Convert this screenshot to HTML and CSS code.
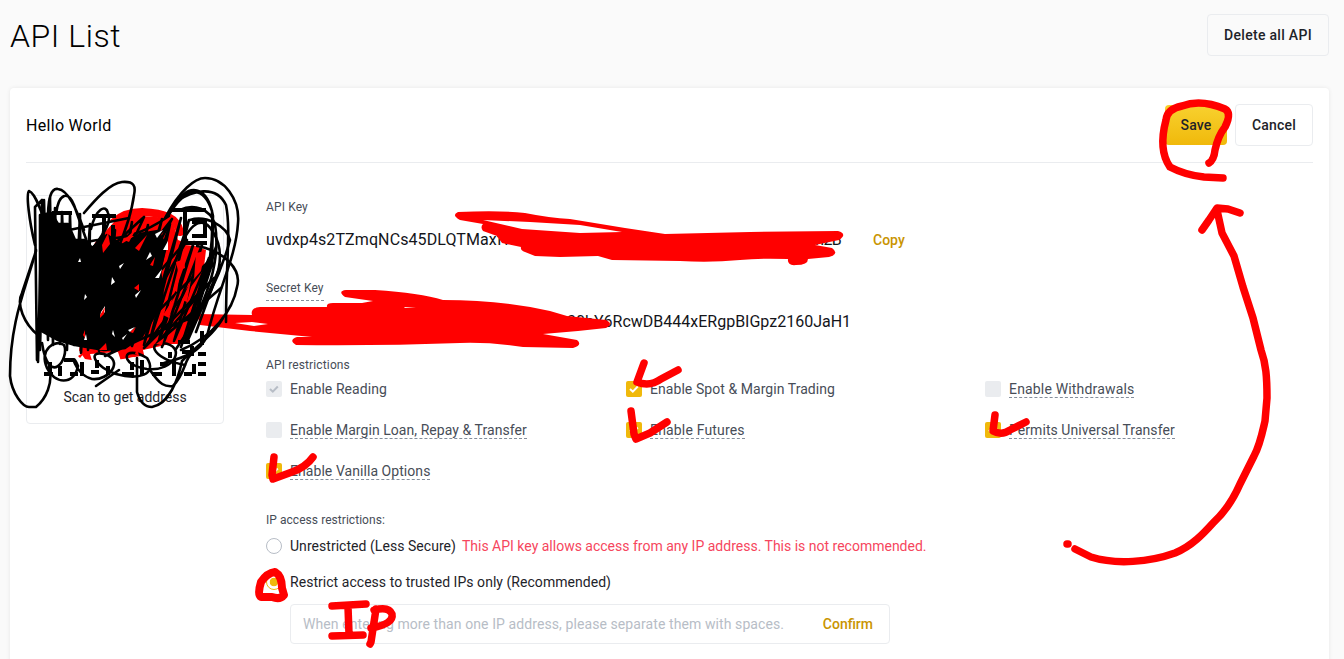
FILE: index.html
```html
<!DOCTYPE html>
<html lang="en">
<head>
<meta charset="utf-8">
<title>API List</title>
<link rel="stylesheet" href="styles.css">
</head>
<body>
<header class="page-head">
  <h1>API List</h1>
  <button class="btn">Delete all API</button>
</header>
<main class="card">
  <div class="card-head">
    <h2>Hello World</h2>
    <div class="actions">
      <button class="btn btn-primary">Save</button>
      <button class="btn btn-cancel">Cancel</button>
    </div>
  </div>
  <div class="card-body">
    <aside class="qr-box"><span>Scan to get address</span></aside>
    <section class="details">
      <div class="label">API Key</div>
      <div class="key-row api-row"><span class="key-start">uvdxp4s2TZmqNCs45DLQTMaxfv</span><span class="key-end">m2B</span><a class="copy">Copy</a></div>
      <div class="label"><span class="dashed secret-label">Secret Key</span></div>
      <div class="key-row secret-row"><span class="secret">30bY6RcwDB444xERgpBIGpz2160JaH1</span></div>
      <div class="label restrict-label">API restrictions</div>
      <div class="options">
        <div class="option"><i class="box"><svg viewBox="0 0 16 16"><path class="tick muted" d="M4 8l2.8 2.7 5-5.2"/></svg></i><span>Enable Reading</span></div>
        <div class="option"><i class="box on"><svg viewBox="0 0 16 16"><path class="tick" d="M4 8l2.8 2.7 5-5.2"/></svg></i><span>Enable Spot &amp; Margin Trading</span></div>
        <div class="option"><i class="box"></i><span class="dashed wide">Enable Withdrawals</span></div>
        <div class="option"><i class="box"></i><span class="dashed">Enable Margin Loan, Repay &amp; Transfer</span></div>
        <div class="option"><i class="box on"><svg viewBox="0 0 16 16"><path class="tick" d="M4 8l2.8 2.7 5-5.2"/></svg></i><span class="dashed wide">Enable Futures</span></div>
        <div class="option"><i class="box on"><svg viewBox="0 0 16 16"><path class="tick" d="M4 8l2.8 2.7 5-5.2"/></svg></i><span class="dashed">Permits Universal Transfer</span></div>
        <div class="option"><i class="box on"><svg viewBox="0 0 16 16"><path class="tick" d="M4 8l2.8 2.7 5-5.2"/></svg></i><span class="dashed">Enable Vanilla Options</span></div>
      </div>
      <div class="label ip-label">IP access restrictions:</div>
      <div class="radio-row"><i class="radio"></i><span class="choice">Unrestricted (Less Secure)</span><span class="warning">This API key allows access from any IP address. This is not recommended.</span></div>
      <div class="radio-row second"><i class="radio picked"></i><span class="choice">Restrict access to trusted IPs only (Recommended)</span></div>
      <div class="ip-input"><span class="placeholder">When entering more than one IP address, please separate them with spaces.</span><a class="confirm">Confirm</a></div>
    </section>
  </div>
</main>

<svg class="ink" viewBox="0 0 1344 659" width="1344" height="659">
  <!-- red scribble beneath the black one -->
  <g class="red">
    <path stroke-width="8" d="M98 252C105 225 120 212 142 212C165 213 177 218 180 232"/>
    <path class="fill" d="M95 240L125 215L172 218L178 240L206 250L199 310L185 340L165 352L105 362L78 358Z"/>
    <path class="fill" d="M196 314L252 315Q250 308 260 307L327 307Q326 303 333 303L362 303L373 301L345 297Q337 291 346 290L375 290Q420 293 443 300Q500 300 550 311L567 316L606 320Q614 324 606 328L578 331L543 334L577 340Q583 345 573 348L523 347Q490 342 460 343Q380 346 296 345Q288 340 297 337L312 337L250 331L200 325Z"/>
    <path class="fill" d="M458 212Q500 210 525 213Q550 218 570 219L625 228L665 234L750 232L838 231Q848 234 839 240L815 245L832 248Q840 254 829 257L808 259Q808 265 796 265Q787 266 788 259Q760 258 740 260Q710 263 680 261L612 260L598 256L560 257L535 256L525 252Q520 250 521 247L502 243L497 236L483 231Q480 227 483 224L460 220Q451 215 458 212Z"/>
  </g>
  <path class="gap" d="M483 220L530 222L580 225L622 232L580 233L522 229Z"/>
  <path class="gap" d="M235 323L252 322L268 324L254 326ZM404 307L416 308L405 308Z"/>
  <path class="gap" d="M80 230l22-12 12 4-22 24zM182 218l24 1 1 28-22-2zM52 352l26-3 14 20-38 5zM90 354l28-2 6 18-28 4zM120 360l14-3 3 12-14 4zM143 350l27-6 24 0-8 26-38 4zM184 340l14-22 8 34-10 18z"/>
  <!-- code remnants along the edges -->
  <path class="modules" d="M52 213h20M92 216h24M104 218v12M113 225v15M170 210h36M185 211v32h22M192 222h13v14h-13M44 374h9M50 362v13M60 366v10M64 360h10M70 374h8M82 362v14M91 372h8M97 360v8M108 366v9M122 374h12M132 362v8M142 360v15M152 374h10M160 364h8M174 361v15M184 374h8M198 374h8M194 364v10M192 346v10M202 331v14M178 342h12M182 352h8M198 354h8M187 335v8M198 364h8M170 352v6"/>
  <g class="black">
    <path class="mass" d="M40 215L51 213L58 224L68 224L75 240L86 240L92 248L107 235L122 245L140 234L158 231L166 246L160 270L163 300L152 320L142 336L125 348L104 350L75 345L58 340L40 330Z"/>
    <path d="M37 360L35 207L42 200L38 362M40 350L44 200L48 340L50 198L53 345L55 208L60 344L62 212L67 350L70 215L74 345L80 214L81 353L90 224L88 350L104 225L99 351L115 230L106 350L132 222L112 352L148 225L124 348L162 219L132 346L170 224L144 345L181 218L150 340L189 220L158 344L194 242L162 347L202 245L174 341L209 258L181 347L216 247L188 340L219 269L196 332"/>
    <path d="M35 245C29 220 26 194 29 191C36 193 44 218 50 237M48 228C47 195 52 188 58 189C68 190 76 208 84 230M56 214C59 191 69 192 74 205L86 239"/>
    <path d="M84 213C95 200 110 183 122 182C134 181 136 186 134 195C132 210 128 225 117 251M91 229C96 208 106 204 108 213C114 225 94 244 87 258"/>
    <path d="M165 218C180 190 195 178 205 178C224 178 240 199 238 223C236 257 219 287 207 336C200 352 186 357 164 363"/>
    <path d="M168 216C188 183 204 187 212 211C214 250 206 289 191 324M177 201C192 191 216 184 226 205C231 230 226 260 226 322M174 206C190 180 208 188 213 216L212 264L194 320M180 210C194 203 210 209 215 224C220 256 213 284 187 337"/>
    <path d="M190 220C206 215 227 226 230 240C220 277 204 308 176 349M180 247C192 220 204 216 213 232C231 260 210 302 188 320M197 246C225 251 242 270 237 287C233 310 213 337 181 350"/>
    <path d="M36 250C27 286 10 319 10 376C12 394 23 407 29 407L36 407C47 398 52 383 50 370M36 251L22 293C16 304 24 324 38 335"/>
    <path d="M137 358L137 392C140 403 145 407 152 407C169 404 178 380 182 361C198 345 215 333 223 318M150 370C160 385 165 387 173 386C188 370 181 361 198 347M96 386L119 370"/>
    <path d="M42 343C49 389 70 358 64 345C55 339 39 349 47 368C54 384 74 386 78 366C70 347 73 374 92 379C109 381 125 360 104 354C86 350 96 368 116 374C138 380 158 375 147 358C122 343 118 365 147 369C175 372 187 346 163 343C146 343 154 359 185 365"/>
    <path d="M81 247C94 232 121 250 169 216M87 269L144 217L103 307L172 219L117 321L187 240L132 337L207 263L144 348L214 278L157 343L221 288M105 356L139 340L193 317M64 231L129 218M120 248L142 236L162 249L139 283"/>
  </g>
  <path class="spots" d="M101 312l4-6 0 6-5 5zM128 330l7-3-5 5zM111 285l1-8 3 5zM119 266l5-3-4 6zM146 260l4-8 2 4zM155 278l7-9-3 9zM135 295l6-5-5 8zM113 330l2 7-3-3zM84 300l1-6 2 3zM78 262l2-4 1 4zM155 234l8-4-6 8zM163 250l5-9 0 9zM84 340l2-6 1 6zM122 338l5-4-4 6z"/>
  <path class="red-spots" d="M100 315l5-8-1 7-4 4zM130 332l6-5-3 6zM134 288l5-4 0 7zM102 245l6-12 2 11-7 9zM124 240l12-11-7 13zM135 248l12-13-8 16zM150 265l5-8-2 9zM99 350l7-7 1 7zM83 335l2-5 0 8zM156 344l8-6-2 7zM78 356l8-5-6 7zM173 290l8-24-4 26zM176 262l8-3 1 9-7 3zM196 253l9-2-4 20-7 8zM163 315l14-22-8 25zM182 300l9-20-4 22zM135 354l2-6 2 8z"/>
  <g class="red">
    <path stroke-width="7.5" d="M1209 163Q1214 160 1215 150Q1218 136 1225 127Q1232 113 1225 109Q1201 99 1182 106Q1167 109 1166 120Q1158 150 1170 167Q1185 175 1204 177L1223 178"/>
    <path stroke-width="7.5" d="M1067 544L1068 544M1075 549L1091 557C1116 565 1150 562 1175 553C1192 546 1204 533 1213 523C1224 513 1233 500 1240 484L1254 456C1260 445 1262 434 1265 421L1267 398C1267 377 1266 364 1261 350L1253 318L1243 287L1234 256L1222 233L1217 210M1202 230L1209 220L1217 208L1228 209L1240 213"/>
    <path stroke-width="7.5" d="M644 363L637 382Q650 387 661 379L678 370"/>
    <path stroke-width="7.5" d="M631 411L634 434L636 439L650 433L667 422"/>
    <path stroke-width="7.5" d="M995 415L993 431Q1002 436 1010 430L1026 422"/>
    <path stroke-width="7.5" d="M274 457L272 475L273 479L292 472Q306 467 313 457"/>
    <path stroke-width="8" d="M261 582Q267 573 275 572Q282 576 282 588L284 595Q280 600 272 597L261 597Q257 595 261 582Z"/>
    <path stroke-width="7.5" d="M332 606L366 604M348 607L349 634M332 636L363 635M376 609L371 642L370 644M374 610Q389 606 392 614Q394 624 371 628"/>
  </g>
</svg>
</body>
</html>
```
FILE: styles.css
```css
* { box-sizing: border-box; }
html, body { height: 659px; overflow: hidden; }
body { margin: 0; background: #fafafa; color: #1e2329; font: 14px/22px Roboto, "Noto Sans", sans-serif; }
h1, h2 { margin: 0; color: #000; }
h1 { font-size: 32px; line-height: 40px; font-weight: 300; padding-top: 16px; letter-spacing: .55px; }
h2 { font-size: 16px; line-height: 24px; font-weight: 400; padding-top: 2px; letter-spacing: .3px; }
.page-head { height: 88px; padding: 0 15px 0 10px; display: flex; justify-content: space-between; }
.page-head .btn { width: 122px; margin-top: 14px; letter-spacing: .3px; }
.btn { height: 42px; padding: 0; border: 1px solid #eaecef; border-radius: 4px; background: transparent; color: #1e2329; font: 500 14px/20px Roboto, sans-serif; letter-spacing: .2px; white-space: nowrap; }
.btn-primary { width: 62px; height: 40px; border: 0; background: linear-gradient(#f8d12f, #f0b90b); }
.btn-cancel { width: 78px; letter-spacing: .2px; }
.actions { display: flex; align-items: center; gap: 8px; }
.card { width: 1319px; height: 600px; margin-left: 10px; padding: 0 16px; background: #fff; border-radius: 4px; box-shadow: 0 0 4px rgba(20, 21, 26, .08); }
.card-head { height: 75px; border-bottom: 1px solid #eaecef; display: flex; align-items: center; justify-content: space-between; }
.card-body { display: flex; gap: 42px; }
.qr-box { width: 198px; height: 229px; margin-top: 32px; border: 1px solid #eaecef; border-radius: 4px; display: flex; align-items: flex-end; justify-content: center; padding-bottom: 15px; letter-spacing: -.02px; }
.details { width: 1047px; padding-top: 34px; white-space: nowrap; }
.label { height: 20px; font-size: 12px; line-height: 20px; color: #474d57; letter-spacing: .13px; }
.dashed { height: 18px; border-bottom: 1px dashed #848e9c; }
.wide { letter-spacing: .17px; }
.key-row { display: flex; height: 24px; font-size: 16px; line-height: 24px; color: #14151a; }
.api-row { margin: 11px 0 26px; }
.key-start { width: 544px; letter-spacing: .1px; }
.key-end { width: 63px; letter-spacing: -.6px; }
.copy, .confirm { color: #c99400; font-size: 14px; font-weight: 500; }
.secret-label { display: inline-block; height: 23px; }
.secret-row { margin: 12px 0 21px; }
.secret { margin-left: 301px; }
.options { display: grid; grid-template-columns: 360px 359px 1fr; grid-auto-rows: 41px; margin-top: 5px; color: #474d57; letter-spacing: .06px; }
.option { display: flex; align-items: flex-start; gap: 8px; line-height: 18px; }
.box { width: 16px; height: 16px; margin-top: 1px; border-radius: 2px; background: #eaecef; }
.box.on { background: #f0b90b; }
.box svg { display: block; width: 16px; height: 16px; }
.tick { fill: none; stroke: #fff; stroke-width: 2; }
.tick.muted { stroke: #b7bdc6; }
.ip-label { margin-top: 7px; letter-spacing: .05px; }
.radio-row { display: flex; align-items: center; height: 22px; margin-top: 5px; }
.radio-row.second { margin-top: 14px; }
.choice { letter-spacing: .04px; }
.radio { width: 16px; height: 16px; margin-right: 8px; border: 1px solid #b7bdc6; border-radius: 50%; }
.radio.picked { border-color: #f0b90b; background: radial-gradient(circle, #f0b90b 4px, transparent 4.6px); }
.warning { margin-left: 6px; color: #f6465d; }
.ip-input { width: 600px; height: 40px; margin: 11px 0 0 24px; padding: 0 16px 0 12px; border: 1px solid #eaecef; border-radius: 4px; display: flex; align-items: center; justify-content: space-between; }
.placeholder { color: #b7bdc6; letter-spacing: .09px; }
.ink { position: absolute; left: 0; top: 0; pointer-events: none; }
.red path { fill: none; stroke: #f00; stroke-linecap: round; stroke-linejoin: round; }
.red .fill, .red-spots { fill: #f00; stroke: none; }
.gap, .spots { fill: #fff; }
.modules { fill: none; stroke: #000; stroke-width: 4; }
.black path { fill: none; stroke: #000; stroke-width: 2.6; stroke-linecap: round; stroke-linejoin: round; }
.black .mass { fill: #000; }
```
